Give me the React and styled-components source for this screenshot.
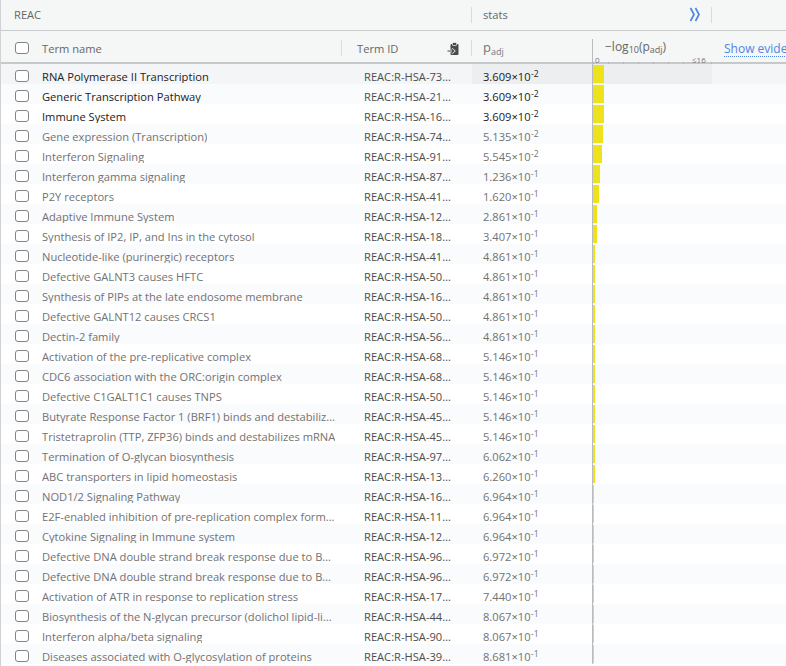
import styled, { createGlobalStyle } from "styled-components";

const GlobalStyle = createGlobalStyle`
  body {
    margin: 0;
    background: #ffffff;
    font-family: "Open Sans", "Noto Sans", sans-serif;
    overflow: hidden;
  }
`;

const Table = styled.div`
  width: 786px;
  height: 666px;
  overflow: hidden;
  border-left: 1px solid #cfd1d3;
  font-size: 11.15px;
`;

const Inner = styled.div`
  width: 960px;
`;

const GroupRow = styled.div`
  display: grid;
  grid-template-columns: 471px 240px 248px;
  height: 30px;
  background: #f5f6f6;
  border-bottom: 1px solid #c9cccf;
`;

const HeadRow = styled.div`
  display: grid;
  grid-template-columns: 341px 130px 120px 120px 248px;
  height: 31px;
  background: #f5f6f6;
  border-bottom: 2px solid #c6c9cc;
`;

const HeadCell = styled.div`
  display: flex;
  align-items: center;
  justify-content: space-between;
  padding-left: ${(p) => p.$pad || 0}px;
  padding-bottom: 1px;
  color: #666666;
  min-width: 0;
`;

const HeadLabel = styled.div`
  display: flex;
  align-items: center;
  gap: ${(p) => p.$gap || 0}px;
  flex: 1;
`;

const Divider = styled.span`
  width: 1px;
  height: 16px;
  background: #d9dbdd;
  flex: none;
`;

const Spacer = styled.span`
  width: ${(p) => p.$w}px;
  flex: none;
`;

const Check = styled.span`
  width: 12px;
  height: 10px;
  border: 1px solid #858585;
  border-radius: 3px;
  background: #ffffff;
  flex: none;
`;

const Padj = styled.span`
  font-size: 13px;
  color: #777777;
  sub {
    font-size: 9px;
    vertical-align: -3px;
  }
`;

const ChartHead = styled.div`
  display: flex;
  flex-direction: column;
  justify-content: space-between;
  margin-top: 8px;
  border-left: 1px solid #b9bbbd;
  svg {
    overflow: visible;
    display: block;
  }
`;

const ChartTitle = styled.div`
  padding-left: 12px;
  padding-top: 1px;
  font-size: 12px;
  line-height: 13px;
  color: #666666;
  sub {
    font-size: 9px;
    vertical-align: -2px;
  }
`;

const EvidenceLink = styled.span`
  margin-left: 12px;
  color: #4f86e3;
  font-size: 12px;
  line-height: 14px;
  white-space: nowrap;
  border-bottom: 1px dotted #4f86e3;
  margin-top: 2px;
`;

const Row = styled.div`
  display: grid;
  grid-template-columns: 341px 130px 120px 120px 248px;
  height: 20px;
  background: ${(p) => (p.$hover ? "#f4f5f6" : p.$even ? "#fafbfd" : "#ffffff")};
`;

const NameCell = styled.div`
  display: flex;
  align-items: flex-start;
  gap: 13px;
  padding-left: 14px;
  min-width: 0;
  ${Check} {
    margin-top: 6px;
  }
`;

const toneColor = {
  id: "#4d4d4d",
  strong: "#222222",
  muted: "#727272",
};

const Text = styled.div`
  margin-top: 6px;
  line-height: 13px;
  height: 13px;
  overflow: hidden;
  white-space: nowrap;
  text-overflow: ellipsis;
  color: ${(p) => toneColor[p.$tone]};
  min-width: 0;
  max-width: ${(p) => p.$max}px;
`;

const IdCell = styled.div`
  padding-left: 22px;
  min-width: 0;
`;

const StatCell = styled.div`
  padding-left: 11px;
  background: ${(p) => (p.$hover ? "#eceeef" : "transparent")};
`;

const StatText = styled.div`
  margin-top: 6px;
  line-height: 13px;
  white-space: nowrap;
  color: ${(p) => toneColor[p.$tone]};
  sup {
    font-size: 8.5px;
    vertical-align: 4px;
    line-height: 0;
    margin-left: 0.5px;
  }
`;

const ChartCell = styled.div`
  border-left: 1px solid #b9bbbd;
  padding: 1px 0;
  background: ${(p) => (p.$hover ? "#eceeef" : "transparent")};
`;

const Bar = styled.div`
  height: 18px;
  background: #eee21c;
`;

const rows = [
  ["RNA Polymerase II Transcription", "REAC:R-HSA-73857", "3.609", -2],
  ["Generic Transcription Pathway", "REAC:R-HSA-212436", "3.609", -2],
  ["Immune System", "REAC:R-HSA-168256", "3.609", -2],
  ["Gene expression (Transcription)", "REAC:R-HSA-74160", "5.135", -2],
  ["Interferon Signaling", "REAC:R-HSA-913531", "5.545", -2],
  ["Interferon gamma signaling", "REAC:R-HSA-877300", "1.236", -1],
  ["P2Y receptors", "REAC:R-HSA-417957", "1.620", -1],
  ["Adaptive Immune System", "REAC:R-HSA-1280218", "2.861", -1],
  ["Synthesis of IP2, IP, and Ins in the cytosol", "REAC:R-HSA-1855183", "3.407", -1],
  ["Nucleotide-like (purinergic) receptors", "REAC:R-HSA-418038", "4.861", -1],
  ["Defective GALNT3 causes HFTC", "REAC:R-HSA-5083625", "4.861", -1],
  ["Synthesis of PIPs at the late endosome membrane", "REAC:R-HSA-1660517", "4.861", -1],
  ["Defective GALNT12 causes CRCS1", "REAC:R-HSA-5083636", "4.861", -1],
  ["Dectin-2 family", "REAC:R-HSA-5621480", "4.861", -1],
  ["Activation of the pre-replicative complex", "REAC:R-HSA-68962", "5.146", -1],
  ["CDC6 association with the ORC:origin complex", "REAC:R-HSA-68689", "5.146", -1],
  ["Defective C1GALT1C1 causes TNPS", "REAC:R-HSA-5083632", "5.146", -1],
  ["Butyrate Response Factor 1 (BRF1) binds and destabilizes mRNA", "REAC:R-HSA-450604", "5.146", -1],
  ["Tristetraprolin (TTP, ZFP36) binds and destabilizes mRNA", "REAC:R-HSA-450513", "5.146", -1],
  ["Termination of O-glycan biosynthesis", "REAC:R-HSA-977068", "6.062", -1],
  ["ABC transporters in lipid homeostasis", "REAC:R-HSA-1369062", "6.260", -1],
  ["NOD1/2 Signaling Pathway", "REAC:R-HSA-168638", "6.964", -1],
  ["E2F-enabled inhibition of pre-replication complex formation", "REAC:R-HSA-113507", "6.964", -1],
  ["Cytokine Signaling in Immune system", "REAC:R-HSA-1280215", "6.964", -1],
  ["Defective DNA double strand break response due to BRCA1 loss of function", "REAC:R-HSA-9663199", "6.972", -1],
  ["Defective DNA double strand break response due to BARD1 loss of function", "REAC:R-HSA-9699150", "6.972", -1],
  ["Activation of ATR in response to replication stress", "REAC:R-HSA-176187", "7.440", -1],
  ["Biosynthesis of the N-glycan precursor (dolichol lipid-linked oligosaccharide, LLO) and transfer to a nascent protein", "REAC:R-HSA-446193", "8.067", -1],
  ["Interferon alpha/beta signaling", "REAC:R-HSA-909733", "8.067", -1],
  ["Diseases associated with O-glycosylation of proteins", "REAC:R-HSA-3906995", "8.681", -1],
];

function ClipboardIcon() {
  return (
    <svg width="12" height="13" viewBox="0 0 12 13">
      <rect x="3.5" y="2" width="8" height="11" rx="1" fill="#4a4a4a" />
      <rect x="5.5" y="0.5" width="4" height="3" rx="0.8" fill="#4a4a4a" stroke="#f5f6f6" strokeWidth="0.8" />
      <path d="M0.5 9 H6.5 M4.5 7 L6.8 9 L4.5 11" stroke="#f5f6f6" strokeWidth="2.6" fill="none" />
      <path d="M0.5 9 H6.5 M4.5 7 L6.8 9 L4.5 11" stroke="#4a4a4a" strokeWidth="1.2" fill="none" />
    </svg>
  );
}

function Chevrons() {
  return (
    <svg width="12" height="15" viewBox="0 0 12 15">
      <path d="M1.5 1 L5 7.5 L1.5 14 M6.5 1 L10 7.5 L6.5 14" stroke="#4f86e3" strokeWidth="1.7" fill="none" />
    </svg>
  );
}

function Axis() {
  const ticks = [0, 15, 30, 45, 60, 75, 90, 105, 118];
  return (
    <svg width="120" height="10" viewBox="0 0 120 10">
      {ticks.map((t) => (
        <line key={t} x1={t + 0.5} y1="6" x2={t + 0.5} y2="10" stroke="#b3b5b7" strokeWidth="1" />
      ))}
      <text x="2" y="6.5" fontSize="8" fill="#777" fontFamily="Open Sans, sans-serif">0</text>
      <text x="99" y="6.5" fontSize="8" fill="#777" fontFamily="Open Sans, sans-serif">≤16</text>
    </svg>
  );
}

export default function App() {
  return (
    <>
      <GlobalStyle />
      <Table>
        <Inner>
          <GroupRow>
            <HeadCell $pad={13}>
              <HeadLabel>REAC</HeadLabel>
              <Divider />
            </HeadCell>
            <HeadCell $pad={11}>
              <HeadLabel>stats</HeadLabel>
              <Chevrons />
              <Spacer $w={10} />
              <Divider />
            </HeadCell>
            <HeadCell />
          </GroupRow>
          <HeadRow>
            <HeadCell $pad={14}>
              <HeadLabel $gap={13}>
                <Check />
                Term name
              </HeadLabel>
              <Divider />
            </HeadCell>
            <HeadCell $pad={15}>
              <HeadLabel>Term ID</HeadLabel>
              <ClipboardIcon />
              <Spacer $w={12} />
              <Divider />
            </HeadCell>
            <HeadCell $pad={11}>
              <Padj>
                p<sub>adj</sub>
              </Padj>
            </HeadCell>
            <ChartHead>
              <ChartTitle>
                −log<sub>10</sub>(p<sub>adj</sub>)
              </ChartTitle>
              <Axis />
            </ChartHead>
            <HeadCell>
              <EvidenceLink>Show evidence codes</EvidenceLink>
            </HeadCell>
          </HeadRow>
          {rows.map(([name, id, mant, exp], i) => {
            const p = parseFloat(mant) * Math.pow(10, exp);
            const tone = p < 0.05 ? "strong" : "muted";
            const hover = i === 0;
            const width = Math.max(1, -Math.log10(p) * 7.5);
            return (
              <Row key={id} $even={i % 2 === 1} $hover={hover}>
                <NameCell>
                  <Check />
                  <Text $tone={tone} $max={295}>
                    {name}
                  </Text>
                </NameCell>
                <IdCell>
                  <Text $tone="id" $max={92}>
                    {id}
                  </Text>
                </IdCell>
                <StatCell $hover={hover}>
                  <StatText $tone={tone}>
                    {mant}×10<sup>{exp}</sup>
                  </StatText>
                </StatCell>
                <ChartCell $hover={hover}>
                  <Bar style={{ width }} />
                </ChartCell>
                <div />
              </Row>
            );
          })}
        </Inner>
      </Table>
    </>
  );
}
